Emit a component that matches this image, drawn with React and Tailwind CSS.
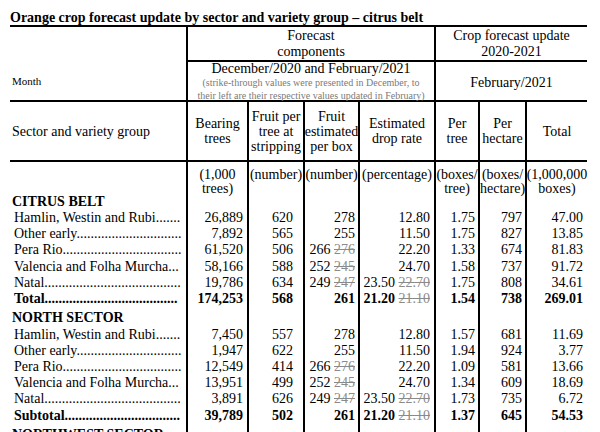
import React from 'react';

const grid = 'grid grid-cols-[176px_61px_56px_55px_76px_44px_47px_62px]';
const pads = ['', 'pr-[4px]', 'pr-[10px]', 'pr-[3px]', 'pr-[4px]', 'pr-[3px]', 'pr-[3px]', 'pr-[4px]'];

// leader dots, counted so each row ends near the column line
const dots = {
  'Hamlin, Westin and Rubi': 7,
  'Other early': 30,
  'Pera Rio': 34,
  'Valencia and Folha Murcha': 3,
  Natal: 39,
  Total: 38,
  Subtotal: 33,
};

const belt = [
  ['Hamlin, Westin and Rubi', '26,889', '620', ['278'], ['12.80'], '1.75', '797', '47.00'],
  ['Other early', '7,892', '565', ['255'], ['11.50'], '1.75', '827', '13.85'],
  ['Pera Rio', '61,520', '506', ['266', '276'], ['22.20'], '1.33', '674', '81.83'],
  ['Valencia and Folha Murcha', '58,166', '588', ['252', '245'], ['24.70'], '1.58', '737', '91.72'],
  ['Natal', '19,786', '634', ['249', '247'], ['23.50', '22.70'], '1.75', '808', '34.61'],
  ['Total', '174,253', '568', ['261'], ['21.20', '21.10'], '1.54', '738', '269.01'],
];

const north = [
  ['Hamlin, Westin and Rubi', '7,450', '557', ['278'], ['12.80'], '1.57', '681', '11.69'],
  ['Other early', '1,947', '622', ['255'], ['11.50'], '1.94', '924', '3.77'],
  ['Pera Rio', '12,549', '414', ['266', '276'], ['22.20'], '1.09', '581', '13.66'],
  ['Valencia and Folha Murcha', '13,951', '499', ['252', '245'], ['24.70'], '1.34', '609', '18.69'],
  ['Natal', '3,891', '626', ['249', '247'], ['23.50', '22.70'], '1.73', '735', '6.72'],
  ['Subtotal', '39,789', '502', ['261'], ['21.20', '21.10'], '1.37', '645', '54.53'],
];

const Val = ({ v }) =>
  Array.isArray(v) ? (
    <>
      {v[0]}
      {v[1] && (
        <>
          {' '}
          <span className="font-normal text-[#8a8a8a] line-through">{v[1]}</span>
        </>
      )}
    </>
  ) : (
    v
  );

const DataRow = ({ row, bold }) => (
  <>
    <div className={`h-[16.2px] whitespace-nowrap pl-[4px] leading-[16px] ${bold ? 'font-bold' : ''}`}>
      {row[0] + '.'.repeat(dots[row[0]])}
    </div>
    {row.slice(1).map((v, i) => (
      <div
        key={i}
        className={`h-[16.2px] whitespace-nowrap border-l-2 border-black text-right leading-[16px] ${pads[i + 1]} ${bold ? 'font-bold' : ''}`}
      >
        <Val v={v} />
      </div>
    ))}
  </>
);

const SectionRow = ({ name, h, pt }) => (
  <>
    <div className={`${h} ${pt} pl-[2px] font-bold leading-[16px] whitespace-nowrap`}>{name}</div>
    {[1, 2, 3, 4, 5, 6, 7].map((i) => (
      <div key={i} className={`${h} border-l-2 border-black`} />
    ))}
  </>
);

const units = [
  ['(1,000', 'trees)'],
  ['(number)'],
  ['(number)'],
  ['(percentage)'],
  ['(boxes/', 'tree)'],
  ['(boxes/', 'hectare)'],
  ['(1,000,000', 'boxes)'],
];

const heads = [
  ['Bearing', 'trees'],
  ['Fruit per', 'tree at', 'stripping'],
  ['Fruit', 'estimated', 'per box'],
  ['Estimated', 'drop rate'],
  ['Per', 'tree'],
  ['Per', 'hectare'],
  ['Total'],
];

export default function App() {
  return (
    <div className="h-[432px] w-[600px] overflow-hidden bg-white pl-[10px] pt-[10px] font-['Liberation_Serif',serif] text-[14px] text-black">
      <h1 className="h-[15px] whitespace-nowrap text-[14px] font-bold leading-[16px]">
        Orange crop forecast update by sector and variety group – citrus belt
      </h1>
      <div className={`${grid} w-[577px] border-t-2 border-black`}>
        {/* row 1 */}
        <div className="h-[35px]" />
        <div className="col-span-4 flex h-[35px] flex-col items-center justify-center border-b-2 border-l-2 border-black leading-[16px]">
          <span>Forecast</span>
          <span>components</span>
        </div>
        <div className="col-span-3 flex h-[35px] flex-col items-center justify-center border-b-2 border-l-2 border-black leading-[16px]">
          <span>Crop forecast update</span>
          <span>2020-2021</span>
        </div>

        {/* row 2 */}
        <div className="flex h-[40px] items-center border-b-2 border-black pl-[2px] pt-[1px] text-[11px]">Month</div>
        <div className="col-span-4 flex h-[40px] flex-col items-center border-b-2 border-l-2 border-black">
          <span className="leading-[14px]">December/2020 and February/2021</span>
          <span className="whitespace-nowrap text-[10px] leading-[13px] text-[#7a7a7a]">
            (strike-through values were presented in December, to
          </span>
          <span className="whitespace-nowrap text-[10px] leading-[13px] text-[#7a7a7a]">
            their left are their respective values updated in February)
          </span>
        </div>
        <div className="col-span-3 flex h-[40px] items-center justify-center border-b-2 border-l-2 border-black pt-[2px]">
          February/2021
        </div>

        {/* row 3 */}
        <div className="flex h-[60px] items-center border-b-2 border-black pl-[2px]">Sector and variety group</div>
        {heads.map((lines, i) => (
          <div
            key={i}
            className="flex h-[60px] flex-col items-center justify-center whitespace-nowrap border-b-2 border-l-2 border-black leading-[15px]"
          >
            {lines.map((l) => (
              <span key={l}>{l}</span>
            ))}
          </div>
        ))}

        {/* units */}
        <div className="h-[31px]" />
        {units.map((lines, i) => (
          <div
            key={i}
            className="flex h-[31px] flex-col items-center whitespace-nowrap border-l-2 border-black pt-[6px] leading-[14px]"
          >
            {lines.map((l) => (
              <span key={l}>{l}</span>
            ))}
          </div>
        ))}

        <SectionRow name="CITRUS BELT" h="h-[17px]" pt="pt-[1px]" />
        {belt.map((r, i) => (
          <DataRow key={r[0]} row={r} bold={i === belt.length - 1} />
        ))}

        <SectionRow name="NORTH SECTOR" h="h-[19.5px]" pt="pt-[3px]" />
        {north.map((r, i) => (
          <DataRow key={r[0]} row={r} bold={i === north.length - 1} />
        ))}

        <SectionRow name="NORTHWEST SECTOR" h="h-[19.3px]" pt="pt-[3px]" />
      </div>
    </div>
  );
}
